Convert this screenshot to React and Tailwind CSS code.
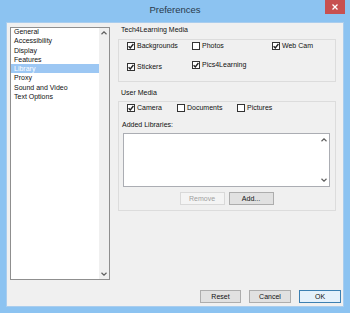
/* ── Preferences dialog ─────────────────────────────── */
const FONT = { fontFamily: '"Liberation Sans", Arial, sans-serif' };

const ITEMS = ['General', 'Accessibility', 'Display', 'Features', 'Library', 'Proxy', 'Sound and Video', 'Text Options'];

const Chevron = ({ down }) => (
  <svg width="6" height="4" viewBox="0 0 6 4" className="text-[#606060]">
    <path d={down ? 'M0.5 0.8 L3 3.2 L5.5 0.8' : 'M0.5 3.2 L3 0.8 L5.5 3.2'} fill="none" stroke="currentColor" strokeWidth="1.2" />
  </svg>
);

const Check = ({ checked, label, className = '' }) => (
  <div className={`flex items-center gap-[2px] h-[8px] ${className}`}>
    <span className="w-[8px] h-[8px] border border-[#333] bg-white flex items-center justify-center shrink-0">
      {checked && (
        <svg width="6" height="6" viewBox="0 0 6 6">
          <path d="M0.6 3.2 L2.3 4.9 L5.4 1" fill="none" stroke="#222" strokeWidth="1.4" />
        </svg>
      )}
    </span>
    <span className="text-[7px] leading-[8px] text-[#111] whitespace-nowrap">{label}</span>
  </div>
);

const Btn = ({ children, w, disabled, primary }) => (
  <div
    className={`h-[13px] flex items-center justify-center text-[7px] leading-none border ${w} ${
      disabled
        ? 'bg-[#f4f4f4] border-[#d9d9d9] text-[#a0a0a0]'
        : primary
        ? 'bg-[#e5f1fb] border-[#3c7fb1] text-[#111]'
        : 'bg-[#e1e1e1] border-[#adadad] text-[#111]'
    }`}
  >
    {children}
  </div>
);

export default function App() {
  return (
    <div style={FONT} className="w-[350px] h-[313px] bg-[#8cc3f1] flex flex-col overflow-hidden">
      {/* Title bar */}
      <div className="relative h-[22px] flex items-center justify-center shrink-0">
        <span className="text-[9.5px] text-[#2a3a4a] -mt-[2px]">Preferences</span>
        <div className="absolute right-[5px] top-0 w-[20px] h-[14px] bg-[#c75050] flex items-center justify-center">
          <svg width="6" height="6" viewBox="0 0 6 6">
            <path d="M0.5 0.5 L5.5 5.5 M5.5 0.5 L0.5 5.5" stroke="white" strokeWidth="1.3" />
          </svg>
        </div>
      </div>

      {/* Client area */}
      <div className="mx-[6px] mb-[6px] h-[285px] bg-[#f0f0f0] border border-[#a9cdee] flex flex-col pt-[4px] pl-[3px] pr-[2px] pb-[3px]">
        <div className="flex gap-[8px] h-[253px]">
          {/* Category list */}
          <div className="w-[100px] h-[253px] bg-white border border-[#8f8f8f] flex">
            <div className="flex-1 flex flex-col -mt-[1px]">
              {ITEMS.map((it) => (
                <div
                  key={it}
                  className={`h-[9.3px] leading-[9.3px] text-[7px] pl-[3px] ${
                    it === 'Library' ? 'bg-[#9cc7f3] text-white' : 'text-[#111]'
                  }`}
                >
                  {it}
                </div>
              ))}
            </div>
            <div className="w-[10px] bg-[#f0f0f0] flex flex-col items-center justify-between py-[3px]">
              <Chevron />
              <Chevron down />
            </div>
          </div>

          {/* Right panel */}
          <div className="w-[218px] flex flex-col">
            <div className="h-[8px] leading-[8px] text-[7px] text-[#111] pl-[3px] -mt-[1px]">Tech4Learning Media</div>
            <div className="mt-[5px] h-[43px] border border-[#dcdcdc] pl-[8px] pt-[2px]">
              <div className="flex">
                <Check checked label="Backgrounds" className="w-[65px]" />
                <Check label="Photos" className="w-[80px]" />
                <Check checked label="Web Cam" />
              </div>
              <div className="flex mt-[11px]">
                <Check checked label="Stickers" className="w-[65px] mt-[2px]" />
                <Check checked label="Pics4Learning" />
              </div>
            </div>

            <div className="h-[8px] leading-[8px] text-[7px] text-[#111] pl-[3px] mt-[7px]">User Media</div>
            <div className="mt-[4px] h-[110px] border border-[#dcdcdc] flex flex-col pt-[2px] pl-[4px] pr-[5px]">
              <div className="flex pl-[4px]">
                <Check checked label="Camera" className="w-[50px]" />
                <Check label="Documents" className="w-[60px]" />
                <Check label="Pictures" />
              </div>
              <div className="mt-[9px] h-[8px] leading-[8px] text-[7px] text-[#111] -ml-[1px]">Added Libraries:</div>
              <div className="mt-[4px] h-[54px] bg-white border border-[#abadb3] flex justify-end">
                <div className="w-[10px] flex flex-col items-center justify-between py-[4px]">
                  <Chevron />
                  <Chevron down />
                </div>
              </div>
              <div className="mt-[5px] flex justify-center gap-[4px]">
                <Btn w="w-[45px]" disabled>Remove</Btn>
                <Btn w="w-[45px]">Add...</Btn>
              </div>
            </div>
          </div>
        </div>

        {/* Dialog buttons */}
        <div className="mt-[10px] flex justify-end gap-[8px]">
          <Btn w="w-[41px]">Reset</Btn>
          <Btn w="w-[42px]">Cancel</Btn>
          <Btn w="w-[42px]" primary>OK</Btn>
        </div>
      </div>
    </div>
  );
}
